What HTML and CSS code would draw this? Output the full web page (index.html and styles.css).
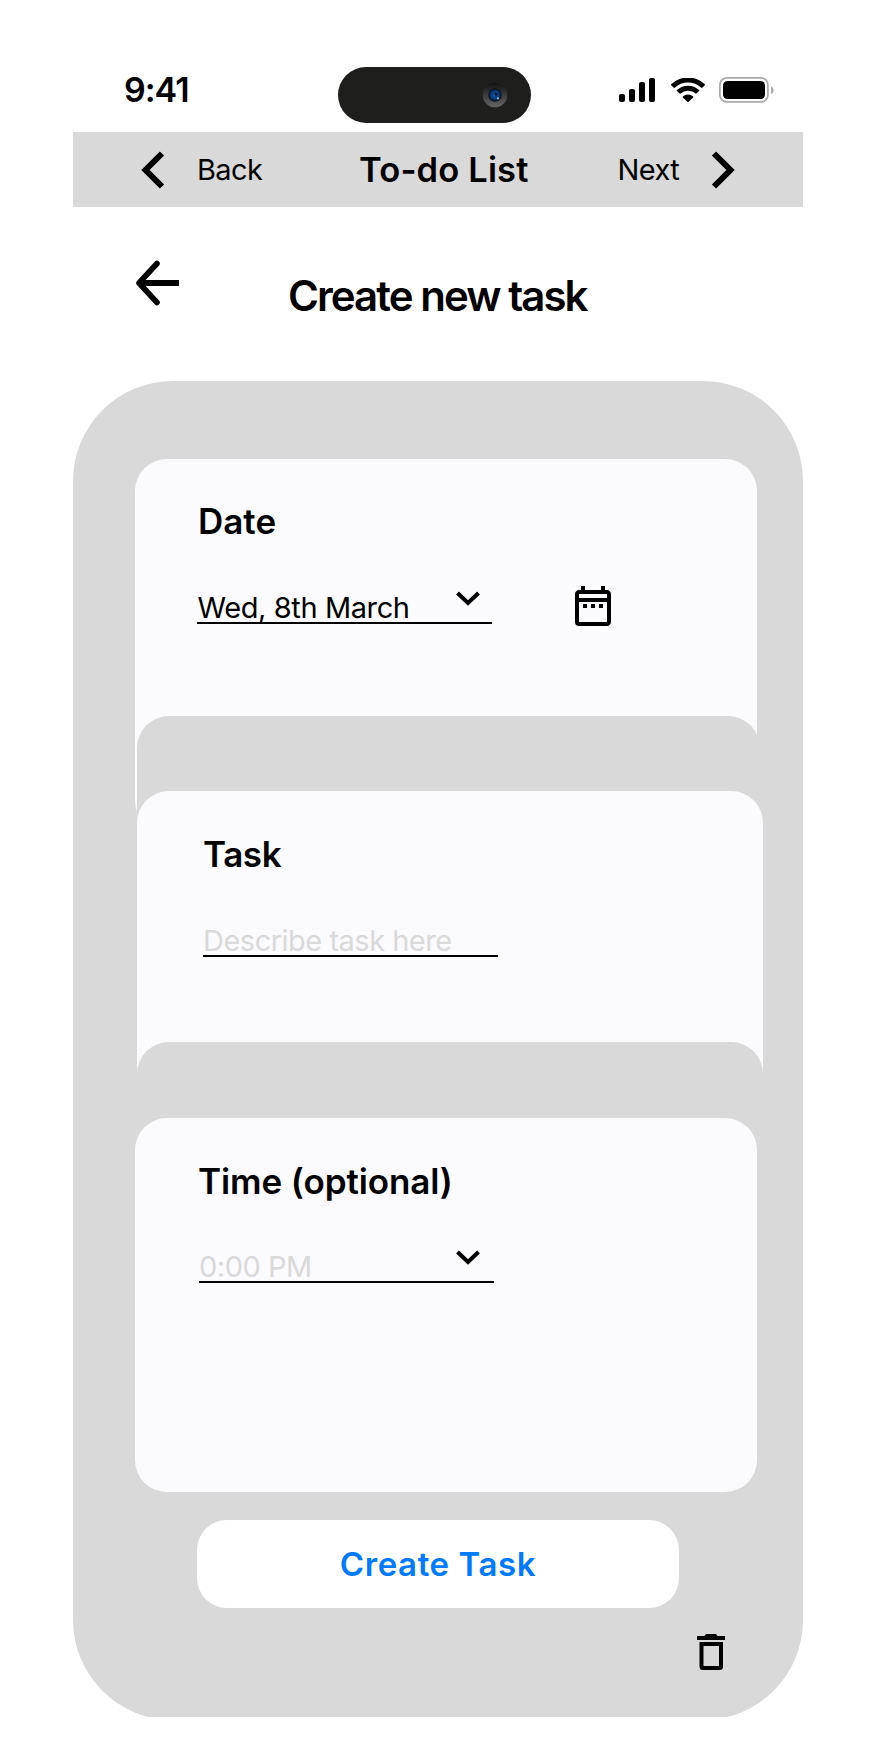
FILE: index.html
```html
<!DOCTYPE html>
<html lang="en">
<head>
<meta charset="utf-8">
<title>Create new task</title>
<link rel="stylesheet" href="styles.css">
</head>
<body>
<main class="screen">
  <header class="status">
    <span class="clock">9:41</span>
    <div class="island">
      <svg class="camera" width="26" height="26" viewBox="0 0 26 26">
        <defs>
          <linearGradient id="ring" x1="0" y1="0" x2="0" y2="1"><stop offset="0" stop-color="#111"/><stop offset="1" stop-color="#666"/></linearGradient>
          <radialGradient id="lens"><stop offset="0" stop-color="#0a63c8"/><stop offset="1" stop-color="#07264f"/></radialGradient>
        </defs>
        <circle cx="13" cy="13" r="12.3" fill="url(#ring)"/>
        <circle cx="13" cy="13" r="6.8" fill="#0b1420"/>
        <circle cx="13" cy="13" r="5.6" fill="url(#lens)"/>
        <path d="M12 11a3 3 0 0 1 4 1l-2 3z" fill="#061a38"/>
        <circle cx="16" cy="16.3" r="1.1" fill="#b9c9dc"/>
      </svg>
    </div>
    <div class="indicators">
      <svg width="36" height="24" viewBox="0 0 36 24"><rect y="16" width="6" height="8" rx="2"/><rect x="10" y="11" width="6" height="13" rx="2"/><rect x="20" y="4" width="6" height="20" rx="2"/><rect x="30" width="6" height="24" rx="2"/></svg>
      <svg width="34" height="24" viewBox="0 0 17 12"><path d="M8.5 2.3c2.5 0 4.8.9 6.6 2.6.1.1.4.1.5 0l1.3-1.3c.1-.2.1-.4 0-.5a12.2 12.2 0 0 0-16.8 0c-.1.1-.1.3 0 .5l1.3 1.3c.1.1.4.1.5 0a9.600 9.600 0 0 1 6.600-2.600zm0 4.100c1.400 0 2.700.5 3.700 1.400.1.1.4.1.5 0l1.300-1.300c.2-.1.2-.4 0-.5a8.100 8.100 0 0 0-11 0c-.2.1-.2.400 0 .5l1.300 1.300c.1.100.4.1.5 0a5.500 5.500 0 0 1 3.700-1.400zm2.600 2.800c.1.100.1.300 0 .5l-2.300 2.200c-.2.200-.4.200-.6 0L5.900 9.700c-.1-.2-.1-.4 0-.5a4 4 0 0 1 5.200 0z"/></svg>
      <svg width="56" height="26" viewBox="0 0 56 26"><rect x=".9" y=".9" width="48" height="24" rx="7" fill="none" stroke="#a9a9a9" stroke-width="1.700"/><rect x="4" y="4" width="42" height="18" rx="4.500"/><path d="M52 9.300c3.400 1.500 3.400 6.500 0 8z" fill="#a9a9a9"/></svg>
    </div>
  </header>

  <nav class="navbar">
    <svg class="nav-back" width="24" height="38" viewBox="0 0 24 38"><path d="M21 2.500 4.500 19 21 35.500" fill="none" stroke="#000" stroke-width="6"/></svg>
    <span class="nav-text back">Back</span>
    <h1 class="nav-title">To-do List</h1>
    <span class="nav-text next">Next</span>
    <svg class="nav-next" width="24" height="38" viewBox="0 0 24 38"><path d="M3 2.500 19.500 19 3 35.500" fill="none" stroke="#000" stroke-width="6"/></svg>
  </nav>

  <div class="heading">
    <svg class="arrow" width="44" height="46" viewBox="0 0 44 46"><path d="M21 3.500 3 23l18 19.500" fill="none" stroke="#000" stroke-width="5.600" stroke-linecap="round" stroke-linejoin="round"/><path d="M3 23h40" stroke="#000" stroke-width="6"/></svg>
    <h2 class="heading-title">Create new task</h2>
  </div>

  <div class="panel-clip">
    <div class="panel">
      <section class="card date">
        <h3 class="label">Date</h3>
        <div class="row">
          <div class="field"><span class="value">Wed, 8th March</span><svg class="caret" width="24" height="15" viewBox="0 0 24 15"><path d="M1.500 2 12 12 22.500 2" fill="none" stroke="#000" stroke-width="4"/></svg></div>
          <svg class="calendar" width="48" height="48" viewBox="0 0 24 24"><path d="M9 11H7v2h2zm4 0h-2v2h2zm4 0h-2v2h2zm2-7h-1V2h-2v2H8V2H6v2H5c-1.110 0-2 .9-2 2v14a2 2 0 0 0 2 2h14c1.100 0 2-.9 2-2V6c0-1.100-.9-2-2-2zm0 16H5V10h14zm0-12H5V6h14z"/></svg>
        </div>
      </section>
      <div class="shade first">
        <section class="card task">
          <h3 class="label">Task</h3>
          <div class="field"><span class="value hint describe">Describe task here</span></div>
        </section>
      </div>
      <div class="shade second">
        <section class="card time">
          <h3 class="label">Time (optional)</h3>
          <div class="field"><span class="value hint clocktime">0:00 PM</span><svg class="caret" width="24" height="15" viewBox="0 0 24 15"><path d="M1.500 2 12 12 22.500 2" fill="none" stroke="#000" stroke-width="4"/></svg></div>
        </section>
      </div>
      <button class="create">Create Task</button>
      <svg class="trash" width="28" height="36" viewBox="0 0 28 36"><path d="M0 2h7.500l1.500-2h10l1.500 2H28v4H0zM2.500 8h23.500v24.500a3.500 3.500 0 0 1-3.500 3.500H6a3.500 3.500 0 0 1-3.500-3.500zm4 4v20h15.500V12z" fill-rule="evenodd"/></svg>
    </div>
  </div>
</main>
</body>
</html>
```
FILE: styles.css
```css
* { box-sizing: border-box; }
body { margin: 0; background: #fff; color: #000; font-family: Inter, "Liberation Sans", sans-serif; }
h1, h2, h3 { margin: 0; font-weight: 600; }
svg { display: block; flex: none; }
span, h1, h2, h3 { white-space: nowrap; }

.screen { width: 730px; height: 1758px; margin-left: 73px; padding-top: 67px; }

.status { display: flex; height: 65px; padding-left: 51px; }
.clock { width: 213.500px; height: 46px; line-height: 46px; font-size: 34px; font-weight: 600; letter-spacing: -1px; }
.island { display: flex; align-items: center; justify-content: flex-end; width: 193.500px; height: 56px; padding-right: 23px; border-radius: 28px; background: #1e1e1c; }
.indicators { display: flex; align-items: center; height: 46px; margin-left: 88px; gap: 16px; }
.indicators svg:last-child { margin-left: -2px; }

.navbar { display: flex; align-items: center; height: 75px; padding-left: 68px; background: #d9d9d9; }
.nav-text { font-size: 29px; line-height: 36px; letter-spacing: -.6px; }
.back { width: 162px; margin-left: 32px; }
.nav-title { width: 258.500px; font-size: 34.500px; line-height: 40px; letter-spacing: .15px; }
.next { width: 93.500px; }

.heading { display: flex; align-items: flex-start; height: 174px; padding: 53px 0 0 63px; }
.heading-title { margin: 10px 0 0 108px; font-size: 42px; line-height: 52px; letter-spacing: -1.950px; }

.panel-clip { height: 1335.500px; overflow: hidden; }
.panel { height: 1339px; padding: 77.500px 0 0 62px; border-radius: 100px; background: #d9d9d9; }
.card { width: 622px; height: 374.500px; padding: 42px 0 0 62px; border-radius: 32px; background: #fbfbfd; }
.date { padding-top: 41.500px; }
.label { font-size: 35px; line-height: 42px; }
.field { display: flex; width: 295px; height: 32px; margin-top: 49.500px; border-bottom: 2px solid #000; line-height: 32px; font-size: 29px; }
.date .label { padding-left: 1px; }
.row { display: flex; }
.row .calendar { margin: 39.500px 0 0 77px; }
.value { width: 259px; padding-left: .5px; letter-spacing: -.4px; }
.hint { color: #d9d9d9; }
.describe { padding-left: 0; letter-spacing: -.5px; }
.clocktime { padding-left: 0; letter-spacing: -.5px; }
.caret { margin-top: -1px; }
.shade { width: 622.500px; margin-left: 2px; padding-top: 75.500px; border-radius: 32px 32px 0 0; background: #d9d9d9; }
.first { height: 326.500px; margin-top: -117.500px; }
.second { width: 626px; }
/* The card continues under the rounded top of the next section. */
.task { width: 626px; height: 290px; padding-left: 66px; border-radius: 32px 32px 0 0; }
.task .label { letter-spacing: -.4px; }
.time { margin-left: -2px; padding-left: 64px; }
.time .value { width: 257px; }
.time .label { margin-left: -1px; letter-spacing: -.1px; }
.create { display: block; width: 482px; height: 88px; margin: 28px 0 0 62px; padding: 0; border: 0; border-radius: 30px; background: #fff; color: #007aff; font: 600 33px/88px Inter, "Liberation Sans", sans-serif; letter-spacing: .6px; }
.trash { margin: 26px 0 0 562px; }
```
